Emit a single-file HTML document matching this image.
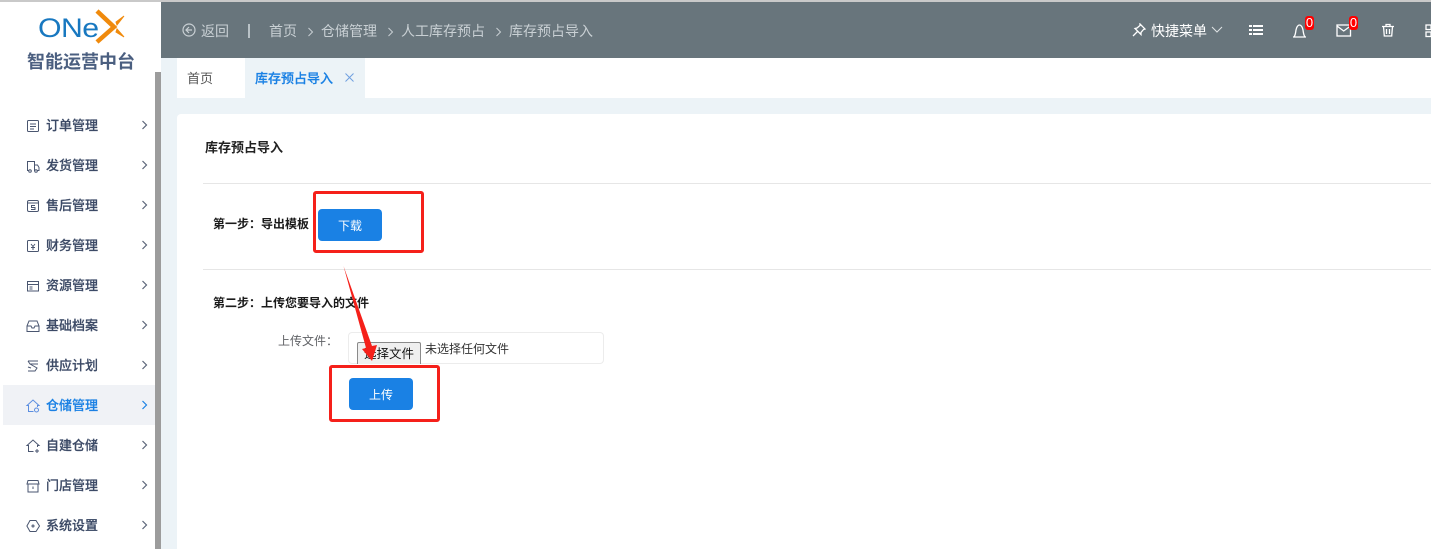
<!DOCTYPE html>
<html><head><meta charset="utf-8"><style>
html,body{margin:0;padding:0;width:1431px;height:549px;overflow:hidden;background:#ecf3f7;font-family:"Liberation Sans","Noto Sans CJK SC",sans-serif;}
.a{position:absolute;white-space:nowrap;}
.m{position:absolute;left:46px;font-size:13px;line-height:20px;color:#3c4a66;font-weight:500;margin-top:1px;-webkit-text-stroke:.2px #3c4a66;}
.ic{position:absolute;left:25px;width:16px;height:16px;margin-top:1px;}
.ic *{fill:none;stroke:#4a5670;stroke-width:1;}
.ch{position:absolute;left:141px;width:7px;height:10px;}
.ch path{fill:none;stroke:#5a6478;stroke-width:1.200;}
.bc{position:absolute;top:21px;font-size:14px;line-height:20px;color:#c9d0d4;white-space:nowrap;}
.btn{position:absolute;background:#1a81e4;color:#fff;font-size:12px;text-align:center;border-radius:4px;}
.red{position:absolute;border:3px solid #f5201a;border-radius:3px;box-sizing:border-box;}
.b{font-size:12px;font-weight:700;color:#1b1b1b;line-height:18px;}
</style></head><body>
<div class="a" style="left:0;top:0;width:1431px;height:2px;background:#c9c9c9;z-index:5"></div>
<div class="a" style="left:0;top:0;width:161px;height:549px;background:#fff"></div>
<div class="a" style="left:155px;top:72px;width:6px;height:477px;background:#9c9c9c"></div>
<div class="a" style="left:161px;top:2px;width:1270px;height:56px;background:#68757c"></div>
<div class="a" style="left:161px;top:58px;width:1270px;height:40px;background:#fff"></div>
<div class="a" style="left:161px;top:58px;width:16px;height:491px;background:#ecf3f7"></div>
<div class="a" style="left:245px;top:58px;width:120px;height:40px;background:#ecf3f7"></div>
<div class="a" style="left:177px;top:114px;width:1254px;height:435px;background:#fff;border-radius:4px 0 0 0"></div>

<!-- logo -->
<div class="a" style="left:38px;top:13px;font-size:27px;line-height:30px;color:#1878c0;transform:scaleX(1.120);transform-origin:left center;font-weight:400;letter-spacing:-.5px">ONe</div>
<svg class="a" style="left:92px;top:8px" width="36" height="38"><path d="M5 3 L22 19 L5 34" fill="none" stroke="#f08a0c" stroke-width="4.500"/><path d="M24 14 L32 8 L25 17 Z M25 21 L32 29 L24 24 Z" fill="#f08a0c" stroke="#f08a0c"/></svg>
<div class="a" style="left:27px;top:50px;font-size:18px;line-height:24px;color:#4b5f80;font-weight:700">智能运营中台</div>

<!-- sidebar -->
<div class="a" style="left:3px;top:385px;width:152px;height:40px;background:#f0f2f6"></div>
<svg class="ic" style="top:117px" viewBox="0 0 16 16"><rect x="2.500" y="2.500" width="11" height="11" rx="1"/><path d="M5 6h6M5 8.500h6M5 11h4"/></svg>
<div class="m" style="top:115px">订单管理</div>
<svg class="ic" style="top:157px" viewBox="0 0 16 16"><path d="M2.500 13V3.500h7V13M9.500 7h3l1.500 2.500V12.500h-2M2.500 12.500h1"/><circle cx="5" cy="13" r="1.300"/><circle cx="11" cy="13" r="1.300"/></svg>
<div class="m" style="top:155px">发货管理</div>
<svg class="ic" style="top:197px" viewBox="0 0 16 16"><rect x="2.500" y="2.500" width="11" height="11" rx="1.500"/><path d="M2.500 5h11M10 7.500H6.500V9.500H10V11.500H6"/></svg>
<div class="m" style="top:195px">售后管理</div>
<svg class="ic" style="top:237px" viewBox="0 0 16 16"><rect x="2.500" y="2.500" width="11" height="11" rx="1"/><path d="M6 6l2 2.500L10 6M8 8.500V12M6 9.500h4"/></svg>
<div class="m" style="top:235px">财务管理</div>
<svg class="ic" style="top:277px" viewBox="0 0 16 16"><rect x="2.500" y="3.500" width="11" height="9.500"/><path d="M2.500 6.500h11M4.500 9h3M4.500 11h3"/></svg>
<div class="m" style="top:275px">资源管理</div>
<svg class="ic" style="top:317px" viewBox="0 0 16 16"><path d="M4 3h8l2 5v5.500H2V8zM2 8h4l1 2h2l1-2h4"/></svg>
<div class="m" style="top:315px">基础档案</div>
<svg class="ic" style="top:357px" viewBox="0 0 16 16"><path d="M3 3h10M3 3l2 3h8M5 6l7 4-2 3H3M3 9l3 1"/></svg>
<div class="m" style="top:355px">供应计划</div>
<svg class="ic" style="top:397px" viewBox="0 0 16 16"><path style="stroke:#5b8ee0" d="M8.500 13.500H3.500V7.500H2L8 2l6 5.500h-1.500V9"/><circle style="stroke:#5b8ee0" cx="11.500" cy="12" r="2"/></svg>
<div class="m" style="top:395px;color:#1a81e4;-webkit-text-stroke:.2px #1a81e4">仓储管理</div>
<svg class="ic" style="top:437px" viewBox="0 0 16 16"><path d="M8.500 13.500H3.500V7.500H2L8 2l6 5.500h-1.500V9M12 11v4M10 13h4"/></svg>
<div class="m" style="top:435px">自建仓储</div>
<svg class="ic" style="top:477px" viewBox="0 0 16 16"><path d="M3 2.500h10l1 3.500H2zM3 6v8h10V6M8 8.500v2.500"/></svg>
<div class="m" style="top:475px">门店管理</div>
<svg class="ic" style="top:517px" viewBox="0 0 16 16"><path d="M5 2.500h6L14.500 8 11 13.500H5L1.900 8z"/><circle cx="8" cy="8" r="1"/></svg>
<div class="m" style="top:515px">系统设置</div>
<svg class="ch" style="top:120px"><path d="M1.500 1l4 4-4 4"/></svg>
<svg class="ch" style="top:160px"><path d="M1.500 1l4 4-4 4"/></svg>
<svg class="ch" style="top:200px"><path d="M1.500 1l4 4-4 4"/></svg>
<svg class="ch" style="top:240px"><path d="M1.500 1l4 4-4 4"/></svg>
<svg class="ch" style="top:280px"><path d="M1.500 1l4 4-4 4"/></svg>
<svg class="ch" style="top:320px"><path d="M1.500 1l4 4-4 4"/></svg>
<svg class="ch" style="top:360px"><path d="M1.500 1l4 4-4 4"/></svg>
<svg class="ch" style="top:400px"><path style="stroke:#1a81e4" d="M1.500 1l4 4-4 4"/></svg>
<svg class="ch" style="top:440px"><path d="M1.500 1l4 4-4 4"/></svg>
<svg class="ch" style="top:480px"><path d="M1.500 1l4 4-4 4"/></svg>
<svg class="ch" style="top:520px"><path d="M1.500 1l4 4-4 4"/></svg>

<!-- header -->
<svg class="a" style="left:182px;top:23px" width="14" height="14" viewBox="0 0 14 14" fill="none" stroke="#c9d0d4" stroke-width="1.200"><circle cx="7" cy="7" r="6"/><path d="M7 4L4 7l3 3M4 7h6"/></svg>
<div class="bc" style="left:201px">返回</div>
<div class="a" style="left:248px;top:24px;width:2px;height:14px;background:#b9c2c7"></div>
<div class="bc" style="left:269px">首页</div>
<div class="bc" style="left:321px">仓储管理</div>
<div class="bc" style="left:401px">人工库存预占</div>
<div class="bc" style="left:509px">库存预占导入</div>
<svg class="a" style="left:307px;top:27px" width="8" height="10" fill="none" stroke="#c9d0d4"><path d="M1.500 1l4 4-4 4"/></svg>
<svg class="a" style="left:387px;top:27px" width="8" height="10" fill="none" stroke="#c9d0d4"><path d="M1.500 1l4 4-4 4"/></svg>
<svg class="a" style="left:495px;top:27px" width="8" height="10" fill="none" stroke="#c9d0d4"><path d="M1.500 1l4 4-4 4"/></svg>

<svg class="a" style="left:1132px;top:23px" width="14" height="14" viewBox="0 0 14 14" fill="none" stroke="#fff" stroke-width="1.300"><path d="M8 1l5 5-1.500.5L9 9.500 9 11.500 3 5.500 5 5l3-2.500zM5.500 8.500L1 13"/></svg>
<div class="bc" style="left:1151px;color:#fff">快捷菜单</div>
<svg class="a" style="left:1211px;top:26px" width="12" height="8" fill="none" stroke="#dfe3e5"><path d="M1 1l5 5 5-5"/></svg>
<svg class="a" style="left:1249px;top:24px" width="15" height="12" fill="#fff"><rect x="0" y="1" width="3" height="2"/><rect x="4" y="1" width="10" height="2"/><rect x="0" y="5" width="3" height="2"/><rect x="4" y="5" width="10" height="2"/><rect x="0" y="9" width="3" height="2"/><rect x="4" y="9" width="10" height="2"/></svg>
<svg class="a" style="left:1292px;top:23px" width="16" height="15" fill="none" stroke="#fff" stroke-width="1.300"><path d="M1 14h13M2 14c1.500-2 1.500-4 2-7 .5-3 2-5 3.500-5S10.500 4 11 7c.5 3 .5 5 2 7"/></svg>
<div class="a" style="left:1305px;top:16px;width:9px;height:14px;background:#f00;border-radius:3px;color:#fff;font-size:13px;line-height:14px;text-align:center">0</div>
<svg class="a" style="left:1336px;top:24px" width="16" height="13" fill="none" stroke="#fff" stroke-width="1.300"><rect x="1" y="1" width="13.500" height="11"/><path d="M1 2l6.700 5L14.500 2"/></svg>
<div class="a" style="left:1349px;top:16px;width:9px;height:14px;background:#f00;border-radius:3px;color:#fff;font-size:13px;line-height:14px;text-align:center">0</div>
<svg class="a" style="left:1381px;top:23px" width="14" height="14" fill="none" stroke="#fff" stroke-width="1.300"><path d="M1 3.500h12M5 3.500V1.500h4v2M2.500 3.500l.8 9.500h7.400l.8-9.500M5.500 6v5M8.500 6v5"/></svg>
<svg class="a" style="left:1425px;top:24px" width="6" height="14" fill="none" stroke="#fff" stroke-width="1.300"><rect x="1" y="1" width="5" height="4.500"/><rect x="1" y="8" width="5" height="4.500"/></svg>

<!-- tabs -->
<div class="a" style="left:187px;top:69px;font-size:13px;line-height:20px;color:#555">首页</div>
<div class="a" style="left:255px;top:69px;font-size:13px;line-height:20px;color:#1a81e4;font-weight:500;-webkit-text-stroke:.2px #1a81e4">库存预占导入</div>
<svg class="a" style="left:345px;top:73px" width="9" height="9" fill="none" stroke="#6f9fe0"><path d="M.5.500l8 8M8.500.500l-8 8"/></svg>

<!-- content -->
<div class="a" style="left:205px;top:138px;font-size:13px;font-weight:700;color:#222;line-height:20px">库存预占导入</div>
<div class="a" style="left:203px;top:183px;width:1228px;height:1px;background:#e6e6e6"></div>
<div class="a" style="left:203px;top:269px;width:1228px;height:1px;background:#e6e6e6"></div>
<div class="a b" style="left:213px;top:215px">第一步：导出模板</div>
<div class="btn" style="left:318px;top:209px;width:64px;height:32px;line-height:34px">下载</div>
<div class="red" style="left:313px;top:191px;width:111px;height:62px"></div>
<div class="a b" style="left:213px;top:294px">第二步：上传您要导入的文件</div>
<div class="a" style="left:278px;top:332px;font-size:12px;line-height:18px;color:#606266">上传文件：</div>
<div class="a" style="left:348px;top:332px;width:254px;height:30px;border:1px solid #ececec;border-radius:4px;background:#fff"></div>
<div class="a" style="left:357px;top:342px;width:62px;height:21px;background:#efefef;border:1px solid #8a8a8a;border-bottom:none;font-size:12.500px;line-height:22px;text-align:center;color:#111;border-radius:2px 2px 0 0">选择文件</div>
<div class="a" style="left:425px;top:340px;font-size:12px;line-height:18px;color:#333">未选择任何文件</div>
<div class="btn" style="left:349px;top:378px;width:64px;height:32px;line-height:34px">上传</div>
<div class="red" style="left:329px;top:365px;width:111px;height:57px"></div>
<svg class="a" style="left:335px;top:260px" width="50" height="110"><path d="M8.500 6L37 86 42 85 37 101 27 89 31 88 Z" fill="#f5201a"/></svg>
</body></html>
